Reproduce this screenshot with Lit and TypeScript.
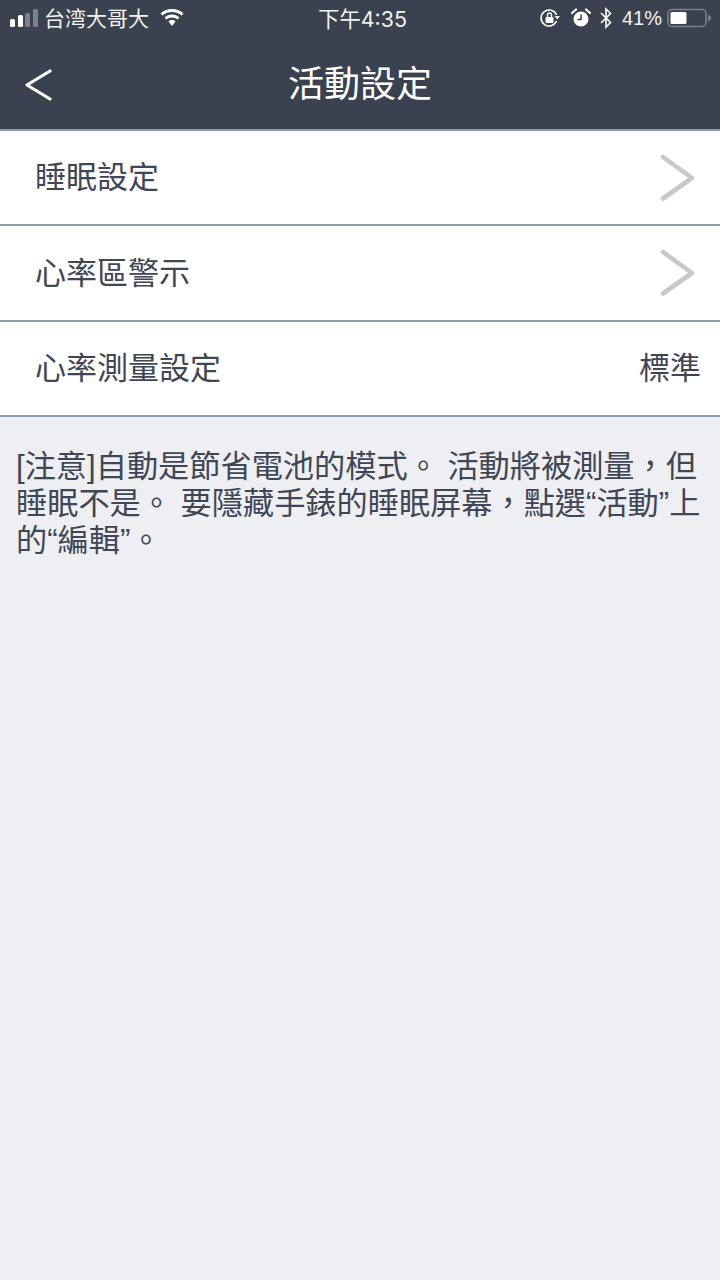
import { LitElement, css, html } from "lit";
import { customElement } from "lit/decorators.js";

const chevron = html`<svg class="chevron" viewBox="0 0 36 48" width="36" height="48">
  <path d="M3 3 L32 24 L3 44.5" fill="none" stroke="#c8c8c8" stroke-width="4.6" stroke-linecap="round" stroke-linejoin="round"></path>
</svg>`;

@customElement("app-root")
export class AppRoot extends LitElement {
  static styles = css`
    :host {
      display: flex;
      flex-direction: column;
      width: 720px;
      height: 1280px;
      background: #edeff2;
      font-family: "Liberation Sans", "Noto Sans CJK TC", sans-serif;
      color: #3f4655;
    }
    .top {
      background: #3a414f;
      height: 131px;
      border-bottom: 2px solid #8d9bab;
      box-sizing: border-box;
      color: #fff;
      display: flex;
      flex-direction: column;
      flex: none;
    }
    .status {
      height: 36px;
      display: grid;
      grid-template-columns: 1fr auto 1fr;
      align-items: center;
      padding: 0 9px 0 10px;
      font-size: 21px;
      color: #f2f3f4;
    }
    .status-left,
    .status-right {
      display: flex;
      align-items: center;
    }
    .status-right {
      justify-content: flex-end;
    }
    .carrier {
      margin: 0 11px 0 6px;
      padding-bottom: 2px;
    }
    .time {
      font-family: Inter, "Noto Sans CJK TC", sans-serif;
      font-size: 21.4px;
      padding-bottom: 2px;
      margin-left: 4px;
    }
    .pct {
      margin: 0 5px 0 9px;
      font-size: 20px;
    }
    .nav {
      flex: 1;
      display: grid;
      grid-template-columns: 1fr auto 1fr;
      align-items: center;
      padding: 5px 24px 0;
    }
    .nav h1 {
      margin: 0;
      font-size: 36px;
      font-weight: 400;
      line-height: 1;
    }
    .row {
      background: #fff;
      height: 95.4px;
      box-sizing: border-box;
      border-bottom: 2px solid #8d9bab;
      display: flex;
      align-items: center;
      justify-content: space-between;
      padding: 0 24px 0 35px;
      font-size: 31px;
      flex: none;
    }
    .row .label,
    .row .value {
      padding-bottom: 6px;
    }
    .row .value {
      margin-right: -5px;
    }
    .note {
      margin: 0;
      padding: 31px 16px 0;
      font-size: 31.2px;
      line-height: 37px;
    }
    svg {
      display: block;
      flex: none;
    }
  `;

  render() {
    return html`
      <div class="top">
        <div class="status">
          <div class="status-left">
            <svg width="28" height="20" viewBox="0 0 28 20">
              <rect x="0" y="11" width="5" height="8" rx="1.5" fill="#fff"></rect>
              <rect x="8" y="7" width="5" height="12" rx="1.5" fill="#fff"></rect>
              <rect x="15" y="5" width="5" height="14" rx="1.5" fill="#7c828d"></rect>
              <rect x="23" y="1" width="5" height="18" rx="1.5" fill="#7c828d"></rect>
            </svg>
            <span class="carrier">台湾大哥大</span>
            <svg width="24" height="20" viewBox="0 0 24 20">
              <path d="M1.5 6.5 C7 1 17 1 22.5 6.5" fill="none" stroke="#fff" stroke-width="3"></path>
              <path d="M5.5 10.5 C9 7 15 7 18.5 10.5" fill="none" stroke="#fff" stroke-width="3"></path>
              <path d="M8.5 13.5 C10.5 11.6 13.5 11.6 15.5 13.5 L12 18 Z" fill="#fff"></path>
            </svg>
          </div>
          <div class="time">下午4:35</div>
          <div class="status-right">
            <svg width="20" height="20" viewBox="0 0 20 20">
              <path d="M16.5 13 A8 8 0 1 1 16.5 7" fill="none" stroke="#fff" stroke-width="1.6"></path>
              <path d="M14.5 8 L20 8 L17.2 11.5 Z" fill="#fff"></path>
              <rect x="5.5" y="9" width="8" height="6" rx="1" fill="#fff"></rect>
              <path d="M7.5 9 V7 a2 2 0 0 1 4 0 V9" fill="none" stroke="#fff" stroke-width="1.4"></path>
            </svg>
            <svg style="margin-left:11px" width="20" height="20" viewBox="0 0 20 20">
              <circle cx="10" cy="11" r="7.5" fill="#fff"></circle>
              <path d="M10 6.5 V11.5 H6.5" fill="none" stroke="#3a414f" stroke-width="1.5"></path>
              <path d="M1 5 L5 1.5 M19 5 L15 1.5" stroke="#fff" stroke-width="2.2" stroke-linecap="round"></path>
            </svg>
            <svg style="margin-left:8px" width="14" height="22" viewBox="0 0 14 22">
              <path d="M2 6 L11.5 15.5 L7 20 V2 L11.5 6.5 L2 16" fill="none" stroke="#fff" stroke-width="1.6"></path>
            </svg>
            <span class="pct">41%</span>
            <svg width="44" height="20" viewBox="0 0 44 20">
              <rect x="1" y="1.5" width="38" height="17" rx="4" fill="none" stroke="#7c828d" stroke-width="1.5"></rect>
              <rect x="3.5" y="4" width="16" height="12" rx="1.5" fill="#fff"></rect>
              <path d="M41 7 a3 3 0 0 1 0 6 Z" fill="#7c828d"></path>
            </svg>
          </div>
        </div>
        <div class="nav">
          <svg width="28" height="34" viewBox="0 0 28 34">
            <path d="M26 3 L3 17 L26 31" fill="none" stroke="#fff" stroke-width="3.2" stroke-linecap="round" stroke-linejoin="round"></path>
          </svg>
          <h1>活動設定</h1>
        </div>
      </div>
      <div class="row"><span class="label">睡眠設定</span>${chevron}</div>
      <div class="row"><span class="label">心率區警示</span>${chevron}</div>
      <div class="row"><span class="label">心率測量設定</span><span class="value">標準</span></div>
      <p class="note">[注意]自動是節省電池的模式。 活動將被測量，但睡眠不是。 要隱藏手錶的睡眠屏幕，點選“活動”上的“編輯”。</p>
    `;
  }
}
